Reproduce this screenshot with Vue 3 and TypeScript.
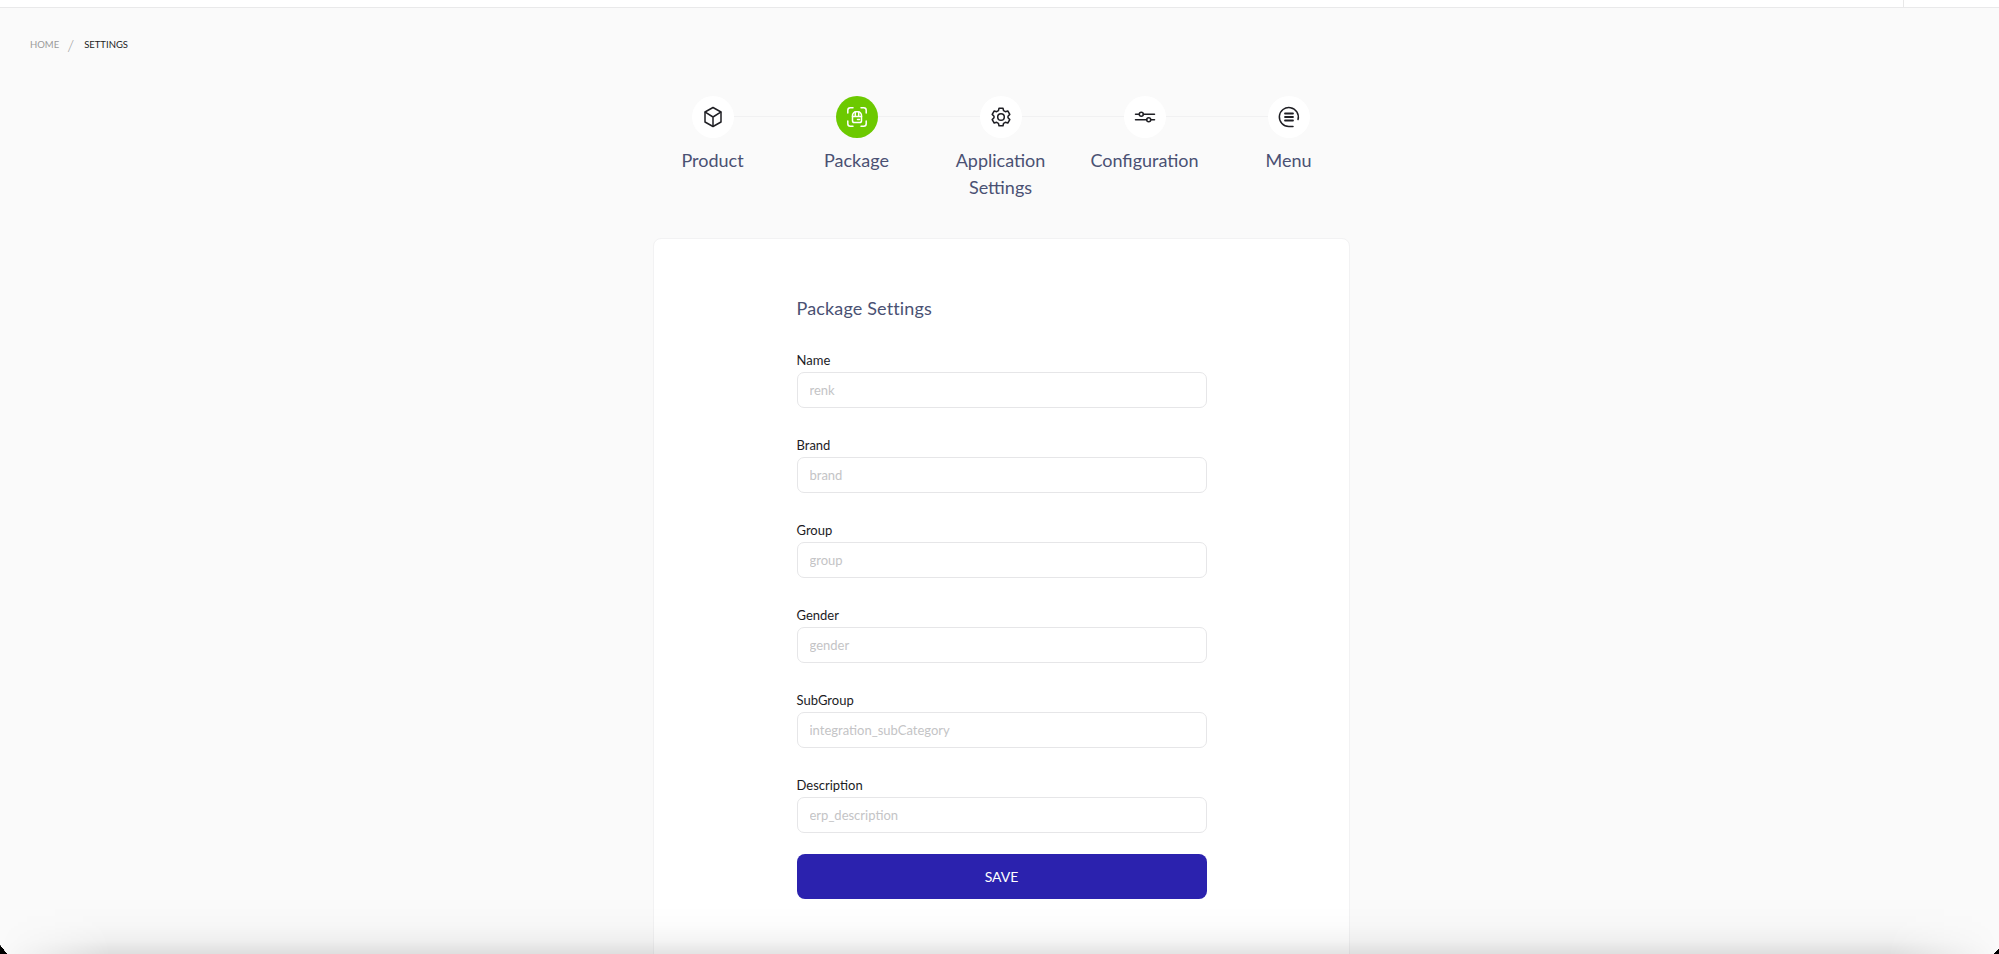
<script setup lang="ts">
const steps = [
  { key: 'product', label: 'Product', active: false },
  { key: 'package', label: 'Package', active: true },
  { key: 'app', label: 'Application Settings', active: false },
  { key: 'config', label: 'Configuration', active: false },
  { key: 'menu', label: 'Menu', active: false },
]
const fields = [
  { label: 'Name', placeholder: 'renk' },
  { label: 'Brand', placeholder: 'brand' },
  { label: 'Group', placeholder: 'group' },
  { label: 'Gender', placeholder: 'gender' },
  { label: 'SubGroup', placeholder: 'integration_subCategory' },
  { label: 'Description', placeholder: 'erp_description' },
]
</script>

<template>
  <div class="page">
    <header class="topbar"><span class="topdivider"></span></header>
    <nav class="crumbs">
      <span class="home">HOME</span>
      <span class="slash">/</span>
      <span class="current">SETTINGS</span>
    </nav>
    <ol class="stepper">
      <li v-for="s in steps" :key="s.key" class="step">
        <span class="circle" :class="{ active: s.active }">
          <svg v-if="s.key === 'product'" viewBox="0 0 24 24" class="ico">
            <path d="M12 2.500l8 4.500v10l-8 4.500-8-4.500V7z" />
            <path d="M4.300 7.200L12 12l7.700-4.800M12 12v9.300" />
          </svg>
          <svg v-else-if="s.key === 'package'" viewBox="0 0 24 24" class="ico">
            <path d="M2.800 8V5.300a2.500 2.500 0 0 1 2.500-2.500H8M16 2.800h2.700a2.500 2.500 0 0 1 2.500 2.500V8M21.200 16v2.700a2.500 2.500 0 0 1-2.500 2.500H16M8 21.200H5.300a2.500 2.500 0 0 1-2.500-2.500V16" />
            <path d="M7.500 10.500A3.500 3.500 0 0 1 11 6.800h2a3.500 3.500 0 0 1 3.500 3.700v5.200a1.800 1.800 0 0 1-1.800 1.800H9.300a1.800 1.800 0 0 1-1.800-1.800z" />
            <path d="M10.300 7v3.500M13.700 7v3.500M7.500 11.500h9M12.500 14.500h2" />
          </svg>
          <svg v-else-if="s.key === 'app'" viewBox="0 0 24 24" class="ico">
            <circle cx="12" cy="12" r="3.300" />
            <path d="M10 3.200h4l.6 2.500 1.700 1 2.500-.7 2 3.400-1.800 1.800v1.600l1.800 1.800-2 3.400-2.500-.7-1.700 1-.6 2.500h-4l-.6-2.500-1.700-1-2.500.7-2-3.400 1.800-1.800v-1.600L3.200 9.400l2-3.400 2.500.7 1.700-1z" />
          </svg>
          <svg v-else-if="s.key === 'config'" viewBox="0 0 24 24" class="ico">
            <path d="M2.500 9.200h3.800M10.300 9.200h11.200M2.500 14.800h11.200M17.700 14.800h3.800" />
            <circle cx="8.300" cy="9.200" r="2" />
            <circle cx="15.700" cy="14.800" r="2" />
          </svg>
          <svg v-else viewBox="0 0 24 24" class="ico">
            <path d="M21 14.500a9.500 9.500 0 1 0-9 7h4" />
            <path class="thick" d="M8 8.500h8M8 12h8M8 15.500h8" />
          </svg>
        </span>
        <span class="steplabel">{{ s.label }}</span>
      </li>
    </ol>
    <main class="card">
      <form class="form" @submit.prevent>
        <h2 class="title">Package Settings</h2>
        <div v-for="f in fields" :key="f.label" class="field">
          <label class="label">{{ f.label }}</label>
          <input class="input" type="text" :placeholder="f.placeholder" />
        </div>
        <button class="save" type="submit">SAVE</button>
      </form>
    </main>
    <div class="shade"></div>
    <span class="corner corner-left"></span>
    <span class="corner corner-right"></span>
  </div>
</template>

<style>
html, body { margin: 0; background: #fafafa; overflow: hidden; }
</style>

<style scoped>
.page {
  position: relative;
  height: 954px;
  overflow: hidden;
  background: #fafafa;
  font-family: "Lato", "Liberation Sans", sans-serif;
}
.topbar {
  position: relative;
  height: 7px;
  background: #fff;
  border-bottom: 1px solid #e9e9ea;
}
.topdivider {
  position: absolute;
  left: 1903px;
  top: 0;
  bottom: 0;
  width: 1px;
  background: #e8e8e8;
}
.crumbs {
  display: flex;
  align-items: center;
  height: 20px;
  margin: 27px 0 0 30px;
  font-size: 9.500px;
  line-height: 20px;
}
.home { color: #9a9a9a; }
.slash { color: #9e9e9e; font-size: 16px; margin: 0 10px 0 8px; font-weight: 300; }
.current { color: #222; }
.stepper {
  list-style: none;
  display: flex;
  justify-content: center;
  margin: 0;
  padding: 41px 0 0 2px;
}
.step {
  position: relative;
  width: 144px;
  display: flex;
  flex-direction: column;
  align-items: center;
}
.step:not(:last-child)::after {
  content: "";
  position: absolute;
  top: 20px;
  left: 72px;
  width: 144px;
  height: 1px;
  background: #f1f1f2;
}
.circle {
  position: relative;
  z-index: 1;
  width: 42px;
  height: 42px;
  border-radius: 50%;
  background: #fff;
  display: flex;
  align-items: center;
  justify-content: center;
  color: #1f1f24;
}
.circle.active { background: #6cc900; color: #fff; }
.ico {
  width: 24px;
  height: 24px;
  fill: none;
  stroke: currentColor;
  stroke-width: 1.500;
  stroke-linecap: round;
  stroke-linejoin: round;
}
.thick { stroke-width: 1.800; }
.steplabel {
  margin-top: 9px;
  width: 130px;
  text-align: center;
  font-size: 18px;
  line-height: 27px;
  color: #4a5173;
}
.card {
  width: 697px;
  height: 760px;
  box-sizing: border-box;
  margin: 37px auto 0;
  position: relative;
  left: 2px;
  background: #fff;
  border: 1px solid #f2f2f3;
  border-radius: 8px;
  padding: 56px 0 0;
}
.form { width: 410px; margin: 0 auto; }
.title {
  margin: 0 0 30px;
  font-size: 18px;
  line-height: 26px;
  font-weight: 400;
  letter-spacing: 0.15px;
  color: #4a5173;
}
.field { margin-bottom: 28px; }
.label {
  display: block;
  font-size: 13px;
  line-height: 18px;
  color: #1c1c1f;
  margin-bottom: 3px;
}
.input {
  display: block;
  width: 100%;
  box-sizing: border-box;
  height: 36px;
  border: 1px solid #e6e6e8;
  border-radius: 7px;
  background: #fff;
  padding: 0 12px;
  font: inherit;
  font-size: 13px;
  outline: none;
}
.input::placeholder { color: #c4c4c6; opacity: 1; }
.save {
  display: block;
  width: 100%;
  height: 45px;
  margin-top: -7px;
  border: 0;
  border-radius: 8px;
  background: #2b22ae;
  color: #fff;
  font: inherit;
  font-size: 14px;
}
.shade {
  position: absolute;
  left: 0;
  right: 0;
  bottom: 0;
  height: 48px;
  pointer-events: none;
  background: linear-gradient(to bottom, rgba(0, 0, 0, 0) 0, rgba(0, 0, 0, 0.012) 40%, rgba(0, 0, 0, 0.045) 72%, rgba(0, 0, 0, 0.11) 100%);
  -webkit-mask-image: linear-gradient(to right, transparent 0, #000 110px, #000 calc(100% - 110px), transparent 100%);
  mask-image: linear-gradient(to right, transparent 0, #000 110px, #000 calc(100% - 110px), transparent 100%);
}
.corner {
  position: absolute;
  bottom: 0;
  pointer-events: none;
}
.corner-left {
  left: 0;
  width: 7px;
  height: 9px;
  background: linear-gradient(to top right, #000 50%, transparent 52%);
}
.corner-right {
  right: 0;
  width: 5px;
  height: 5px;
  background: linear-gradient(to top left, #000 50%, transparent 52%);
}
</style>
